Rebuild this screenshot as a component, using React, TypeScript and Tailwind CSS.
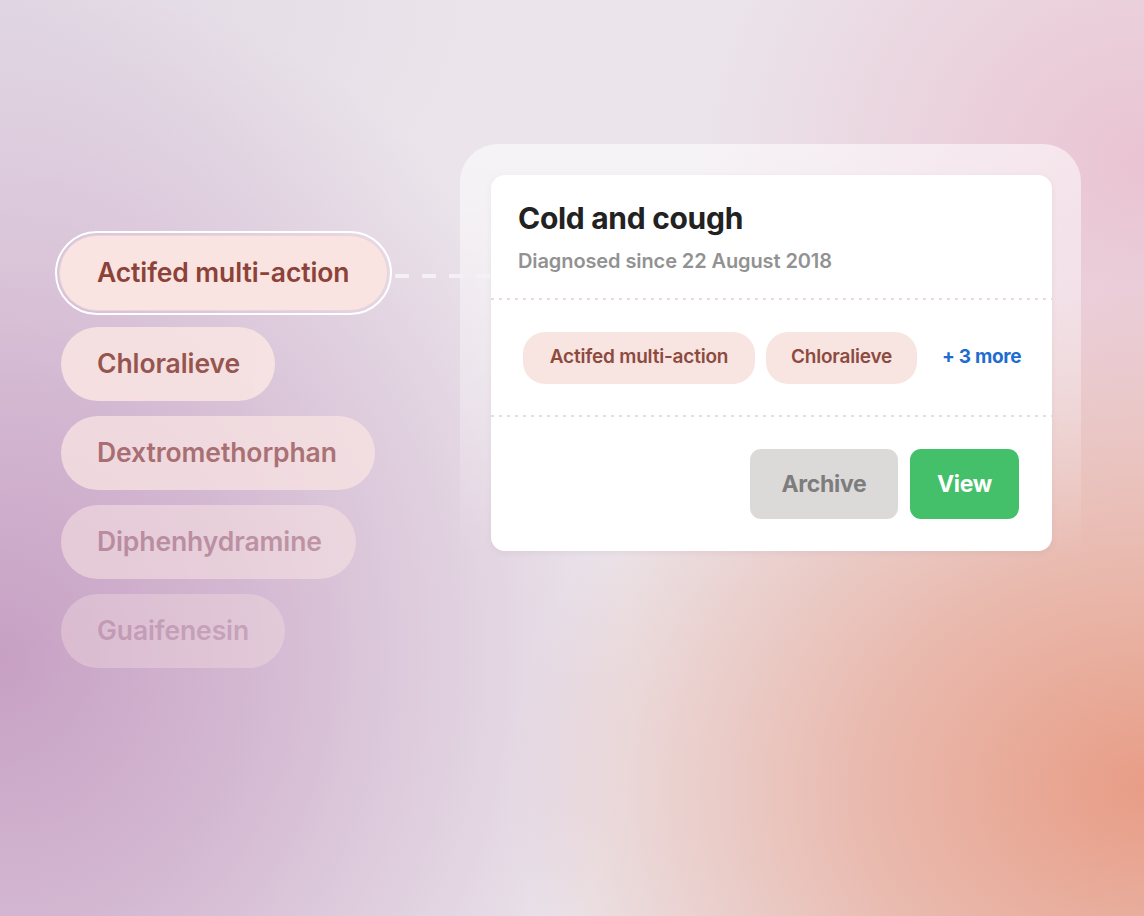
import React from "react";

const font = { fontFamily: "Inter, 'Liberation Sans', sans-serif" };

function LeftPill({ label, cls }: { label: string; cls: string }) {
  return (
    <div className={`flex h-[74px] items-center rounded-full bg-[#f9e4e3] pl-[36px] text-[26.5px] font-semibold tracking-[-0.1px] ${cls}`}>
      {label}
    </div>
  );
}

export default function App() {
  return (
    <div
      style={font}
      className="relative flex h-[916px] w-[1144px] items-start overflow-hidden bg-[#ebe5eb] bg-[image:radial-gradient(ellipse_55%_75%_at_0%_72%,#c7a0c4_0%,rgba(199,160,196,0.65)_40%,rgba(199,160,196,0)_100%),radial-gradient(ellipse_55%_55%_at_100%_86%,#e89d86_0%,rgba(232,157,134,0.6)_45%,rgba(232,157,134,0)_100%),radial-gradient(ellipse_40%_45%_at_100%_18%,#eac3d2_0%,rgba(234,195,210,0)_100%),radial-gradient(ellipse_45%_35%_at_0%_0%,#e1d8e4_0%,rgba(225,216,228,0)_100%)] pl-[55px]"
    >
      {/* Left list */}
      <div className="mt-[231px] flex w-[337px] shrink-0 flex-col items-start gap-[15px]">
        <div className="-mb-[3px] rounded-full border-2 border-white p-[2px]">
          <div className="flex h-[76px] w-[329px] items-center rounded-full border border-[#e9d3dc] bg-[#f9e4e2] pl-[37px] text-[26.5px] font-semibold tracking-[-0.1px] text-[#8c4238]">
            Actifed multi-action
          </div>
        </div>
        <LeftPill label="Chloralieve" cls="ml-[6px] w-[214px] text-[#8f4a41] opacity-90" />
        <LeftPill label="Dextromethorphan" cls="ml-[6px] w-[314px] text-[#9a5754] opacity-75" />
        <LeftPill label="Diphenhydramine" cls="ml-[6px] w-[295px] text-[#a8707c] opacity-55" />
        <LeftPill label="Guaifenesin" cls="ml-[6px] w-[224px] text-[#b17d92] opacity-35" />
      </div>

      {/* Connector */}
      <div className="relative z-10 mt-[274px] -mr-[30px] ml-[3px] h-[4px] w-[95px] shrink-0 bg-[image:linear-gradient(to_right,#f5f0f5_14px,transparent_14px)] bg-[length:27px_4px] bg-left" />

      {/* Card frame */}
      <div className="mt-[144px] h-[450px] w-[621px] shrink-0 rounded-[38px] bg-[image:linear-gradient(to_bottom,rgba(255,255,255,0.55),rgba(255,255,255,0.28)_55%,rgba(255,255,255,0)_92%)] p-[31px] pr-[30px]">
        <div className="h-[376px] w-[561px] overflow-hidden rounded-[14px] bg-white shadow-[0_2px_6px_rgba(120,90,110,0.08)]">
          <div className="px-[27px] pt-[25px]">
            <div className="text-[30px] font-bold leading-[36px] tracking-[-0.3px] text-[#222222]">Cold and cough</div>
            <div className="mt-[13px] text-[20px] font-semibold leading-[24px] tracking-[-0.1px] text-[#929292]">
              Diagnosed since 22 August 2018
            </div>
          </div>
          <div className="mt-[25px] h-[2px] w-full bg-[image:linear-gradient(to_right,#ecd9dc_3px,transparent_3px)] bg-[length:8px_2px]" />
          <div className="flex h-[115px] items-center pl-[32px]">
            <div className="flex h-[52px] w-[232px] items-center justify-center rounded-[22px] bg-[#f8e4e1] text-[19px] font-semibold tracking-[-0.2px] text-[#8c4a40]">
              Actifed multi-action
            </div>
            <div className="ml-[11px] flex h-[52px] w-[151px] items-center justify-center rounded-[22px] bg-[#f8e4e1] text-[19px] font-semibold tracking-[-0.2px] text-[#8c4a40]">
              Chloralieve
            </div>
            <div className="ml-[25px] text-[19px] font-bold tracking-[-0.3px] text-[#1e6ccf]">+ 3 more</div>
          </div>
          <div className="h-[2px] w-full bg-[image:linear-gradient(to_right,#ecd9dc_3px,transparent_3px)] bg-[length:8px_2px]" />
          <div className="flex justify-end gap-[12px] pr-[33px] pt-[32px]">
            <button className="flex h-[70px] w-[148px] items-center justify-center rounded-[11px] bg-[#dcdad9] text-[23px] font-bold tracking-[-0.3px] text-[#7d7d7d]">
              Archive
            </button>
            <button className="flex h-[70px] w-[109px] items-center justify-center rounded-[11px] bg-[#45c06a] text-[23px] font-bold tracking-[-0.3px] text-white">
              View
            </button>
          </div>
        </div>
      </div>
    </div>
  );
}
